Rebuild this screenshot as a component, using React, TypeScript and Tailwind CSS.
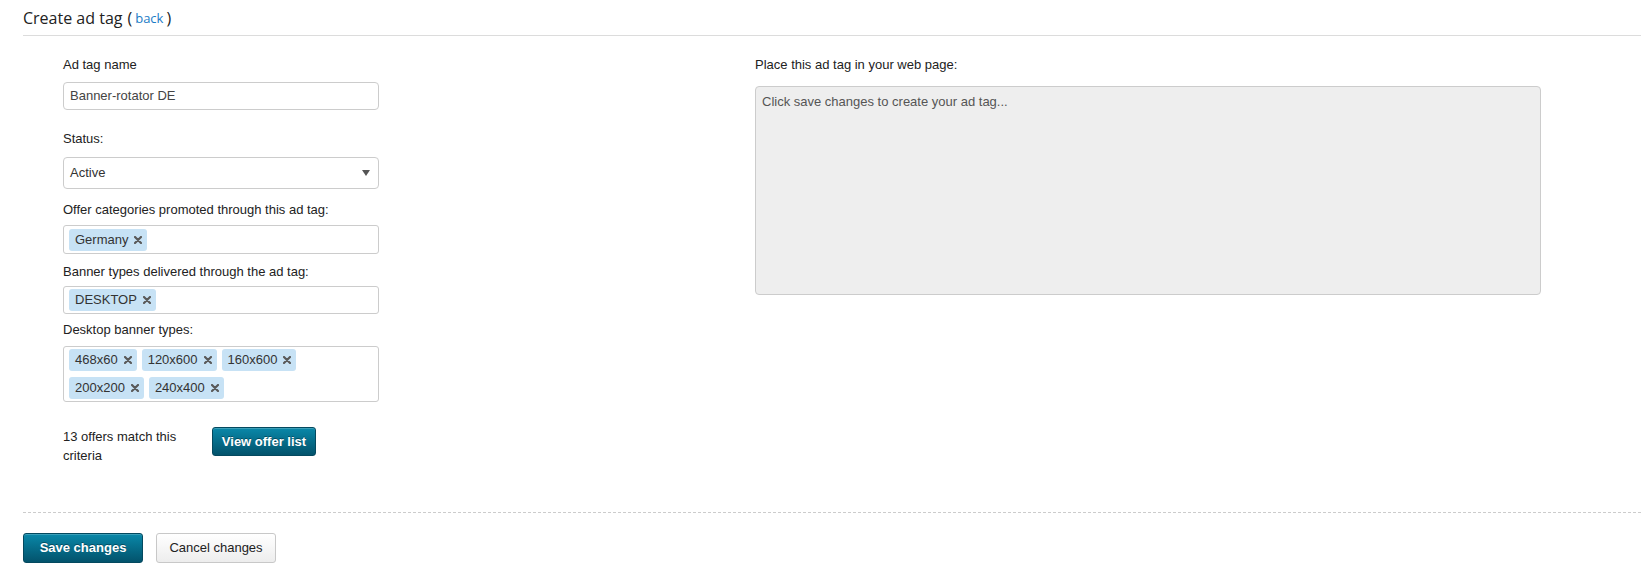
import React from 'react';

// Create ad tag form

const Chip: React.FC<{ label: string }> = ({ label }) => (
    <span className="inline-flex h-[22px] items-center rounded-[3px] bg-[#c7e2f5] pl-[6px] pr-[5px] text-[13px] text-[#333]">
        {label}
        <svg className="ml-[6px]" width="8" height="8" viewBox="0 0 8 8">
            <path d="M1 1 L7 7 M7 1 L1 7" stroke="#5a5a5a" strokeWidth="2.2" strokeLinecap="round" />
        </svg>
    </span>
);

const Label: React.FC<{ children: React.ReactNode; className?: string }> = ({ children, className = '' }) => (
    <div className={`text-[13px] leading-[18px] text-[#222] ${className}`}>{children}</div>
);

const primaryBtn =
    'rounded-[3px] border border-[#04495f] bg-gradient-to-b from-[#0a88a9] to-[#03536c] text-[13px] font-bold text-white [text-shadow:0_-1px_0_rgba(0,0,0,0.35)] shadow-[inset_0_1px_0_rgba(255,255,255,0.2)]';

export default function App() {
    return (
        <div className="min-h-[572px] bg-white pl-[23px] pr-[10px]" style={{ fontFamily: '"Liberation Sans", Arial, sans-serif' }}>
            {/* header */}
            <div className="flex h-[36px] items-end border-b border-[#dcdcdc] pb-[7px]" style={{ fontFamily: '"Open Sans", "Noto Sans", sans-serif' }}>
                <span className="text-[16px] leading-[20px] text-[#222]">Create ad tag</span>
                <span className="ml-[5px] text-[16px] leading-[20px] text-[#222]">(</span>
                <a className="ml-[3px] text-[13px] leading-[20px] text-[#1b7bc6]">back</a>
                <span className="ml-[3px] text-[16px] leading-[20px] text-[#222]">)</span>
            </div>

            <div className="flex pt-[20px] pl-[40px]">
                {/* left column */}
                <div className="w-[316px] shrink-0">
                    <Label className="mb-[8px]">Ad tag name</Label>
                    <div className="flex h-[28px] items-center rounded-[4px] border border-[#ccc] px-[6px] text-[13px] text-[#444]">
                        Banner-rotator DE
                    </div>

                    <Label className="mt-[20px] mb-[9px]">Status:</Label>
                    <div className="flex h-[32px] items-center justify-between rounded-[4px] border border-[#ccc] pl-[6px] pr-[8px] text-[13px] text-[#333]">
                        <span>Active</span>
                        <svg width="8" height="6" viewBox="0 0 8 6">
                            <path d="M0 0 H8 L4 6 Z" fill="#555" />
                        </svg>
                    </div>

                    <Label className="mt-[12px] mb-[6px]">Offer categories promoted through this ad tag:</Label>
                    <div className="flex h-[29px] items-center rounded-[3px] border border-[#ccc] px-[5px]">
                        <Chip label="Germany" />
                    </div>

                    <Label className="mt-[9px] mb-[5px]">Banner types delivered through the ad tag:</Label>
                    <div className="flex h-[28px] items-center rounded-[3px] border border-[#ccc] px-[5px]">
                        <Chip label="DESKTOP" />
                    </div>

                    <Label className="mt-[7px] mb-[7px]">Desktop banner types:</Label>
                    <div className="flex h-[56px] flex-wrap content-start gap-x-[5px] gap-y-[6px] rounded-[3px] border border-[#ccc] px-[5px] pt-[2px]">
                        <Chip label="468x60" />
                        <Chip label="120x600" />
                        <Chip label="160x600" />
                        <Chip label="200x200" />
                        <Chip label="240x400" />
                    </div>

                    <div className="mt-[25px] flex items-start">
                        <div className="w-[149px] text-[13px] leading-[19px] text-[#222]">13 offers match this criteria</div>
                        <button className={`h-[29px] w-[104px] ${primaryBtn}`}>View offer list</button>
                    </div>
                </div>

                {/* right column */}
                <div className="ml-[376px] w-[786px]">
                    <Label className="mb-[12px]">Place this ad tag in your web page:</Label>
                    <div className="h-[209px] rounded-[4px] border border-[#ccc] bg-[#eeeeee] px-[6px] pt-[5px] text-[13px] text-[#555]">
                        Click save changes to create your ad tag...
                    </div>
                </div>
            </div>

            {/* footer */}
            <div className="mt-[47px] flex gap-[13px] border-t border-dashed border-[#ccc] pt-[20px]">
                <button className={`h-[30px] w-[120px] ${primaryBtn}`}>Save changes</button>
                <button className="h-[30px] w-[120px] rounded-[3px] border border-[#c8c8c8] bg-gradient-to-b from-white to-[#ededed] text-[13px] text-[#222]">
                    Cancel changes
                </button>
            </div>
        </div>
    );
}
